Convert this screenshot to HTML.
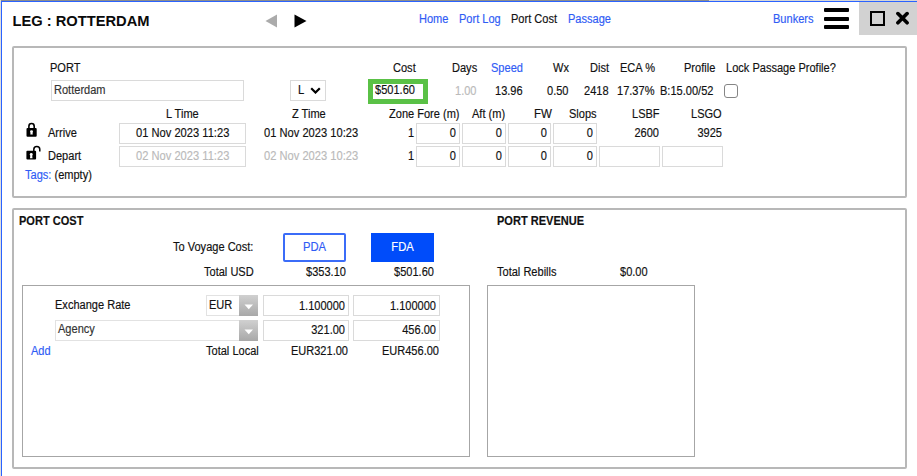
<!DOCTYPE html>
<html><head><meta charset="utf-8">
<style>
html,body{margin:0;padding:0;}
body{width:917px;height:476px;overflow:hidden;background:#fff;position:relative;font-family:"Liberation Sans",sans-serif;font-size:11px;color:#111;}
.a{position:absolute;}
.t{position:absolute;white-space:pre;line-height:13px;font-size:12px;transform:scaleX(0.92);transform-origin:0 0;-webkit-text-stroke-width:0.16px;}
.r{transform-origin:100% 0;}
.b{font-weight:bold;}
.bl{color:#2f5cf5;}
.g{color:#bababa;}
.box{position:absolute;box-sizing:border-box;border:1px solid #dadada;background:#fff;}
.r{text-align:right;transform-origin:100% 0 !important;}
.panel{position:absolute;box-sizing:border-box;border:2px solid #b8b8b8;border-radius:2px;}
.ibox{position:absolute;box-sizing:border-box;border:1px solid #a6a6a6;}
</style></head><body>
<!-- window chrome -->
<div class="a" style="left:0;top:0;width:709px;height:1px;background:#8c8c8c"></div>
<div class="a" style="left:709px;top:0;width:208px;height:1px;background:#d6d6d6"></div>
<div class="a" style="left:0;top:0;width:1px;height:476px;background:#dedede"></div>
<div class="a" style="left:1px;top:1px;width:916px;height:1px;background:#2b63ff"></div>
<div class="a" style="left:1px;top:1px;width:1px;height:475px;background:#2b63ff"></div>

<!-- header -->
<div class="t b" style="left:12.5px;top:13px;font-size:14.7px;line-height:17px;color:#0a0a0a;transform:none;-webkit-text-stroke-width:0">LEG : ROTTERDAM</div>
<svg class="a" style="left:265px;top:14px" width="13" height="14"><polygon points="12,0.5 12,13.5 0.5,7" fill="#ababab"/></svg>
<svg class="a" style="left:294px;top:14px" width="13" height="14"><polygon points="0.5,0.5 0.5,13.5 12.5,7" fill="#000"/></svg>
<div class="t bl" style="left:419px;top:13px">Home</div>
<div class="t bl" style="left:459px;top:13px">Port Log</div>
<div class="t" style="left:511px;top:13px">Port Cost</div>
<div class="t bl" style="left:568px;top:13px">Passage</div>
<div class="t bl" style="left:773px;top:13px">Bunkers</div>
<div class="a" style="left:824px;top:8px;width:25px;height:4px;background:#000;border-radius:1px"></div>
<div class="a" style="left:824px;top:17px;width:25px;height:4px;background:#000;border-radius:1px"></div>
<div class="a" style="left:824px;top:25px;width:25px;height:4px;background:#000;border-radius:1px"></div>
<div class="a" style="left:859px;top:2px;width:58px;height:33px;background:#d2d2d2"></div>
<div class="a" style="left:870px;top:11px;width:15px;height:15px;box-sizing:border-box;border:2.5px solid #000"></div>
<svg class="a" style="left:896px;top:11px" width="14" height="15"><path d="M1.9,2.6 L11.1,11.8 M11.1,2.6 L1.9,11.8" stroke="#000" stroke-width="3.6" stroke-linecap="round"/></svg>

<!-- top panel -->
<div class="panel" style="left:12px;top:46px;width:895px;height:152px"></div>
<div class="t" style="left:50px;top:62px">PORT</div>
<div class="box" style="left:51px;top:80px;width:193px;height:21px"></div>
<div class="t" style="left:54px;top:84px;color:#333">Rotterdam</div>
<div class="box" style="left:290px;top:80px;width:36px;height:21px"></div>
<div class="t" style="left:298px;top:84px;font-size:12.3px">L</div>
<svg class="a" style="left:310px;top:87px" width="11" height="7"><path d="M1.2,1.2 L5.5,5.5 L9.8,1.2" fill="none" stroke="#000" stroke-width="2.2"/></svg>
<div class="t" style="left:393px;top:62px">Cost</div>
<div class="a" style="left:368px;top:79px;width:60px;height:25px;box-sizing:border-box;border:5px solid #5ac146;background:#fff"></div>
<div class="t" style="left:375px;top:84px">$501.60</div>
<div class="t" style="left:452px;top:62px">Days</div>
<div class="t bl" style="left:491px;top:62px">Speed</div>
<div class="t" style="left:553px;top:62px">Wx</div>
<div class="t" style="left:590px;top:62px">Dist</div>
<div class="t" style="left:620px;top:62px">ECA %</div>
<div class="t" style="left:684px;top:62px">Profile</div>
<div class="t" style="left:726px;top:62px">Lock Passage Profile?</div>
<div class="t g" style="left:455px;top:85px">1.00</div>
<div class="t" style="left:495px;top:85px">13.96</div>
<div class="t" style="left:547px;top:85px">0.50</div>
<div class="t" style="left:584px;top:85px">2418</div>
<div class="t" style="left:617px;top:85px">17.37%</div>
<div class="t" style="left:660px;top:85px">B:15.00/52</div>
<div class="a" style="left:724px;top:84px;width:14px;height:14px;box-sizing:border-box;border:1.4px solid #858585;border-radius:3px"></div>

<div class="t" style="left:166px;top:108px">L Time</div>
<div class="t" style="left:292px;top:108px">Z Time</div>
<div class="t" style="left:389px;top:108px">Zone Fore (m)</div>
<div class="t" style="left:472px;top:108px">Aft (m)</div>
<div class="t" style="left:534px;top:108px;font-size:12.55px">FW</div>
<div class="t" style="left:569px;top:108px">Slops</div>
<div class="t" style="left:632px;top:108px">LSBF</div>
<div class="t" style="left:691px;top:108px">LSGO</div>

<!-- locks -->
<svg class="a" style="left:22px;top:120px" width="20" height="20"><path d="M6.9,8.5 V6.15 A2.65,2.65 0 0 1 12.2,6.15 V8.5" fill="none" stroke="#000" stroke-width="1.6"/><rect x="4.5" y="8" width="10.2" height="8.8" rx="1" fill="#000"/><circle cx="9.55" cy="11.6" r="1.45" fill="#fff"/><path d="M8.7,11.8 L10.4,11.8 L10.8,14.6 L8.3,14.6 Z" fill="#fff"/></svg>
<div class="t" style="left:48px;top:127px">Arrive</div>
<svg class="a" style="left:22px;top:142px" width="22" height="20"><path d="M11.8,9.2 V7.55 A3,3 0 0 1 17.8,7.55 V9.5" fill="none" stroke="#000" stroke-width="1.5"/><rect x="4.4" y="8.8" width="9.7" height="8.8" rx="1" fill="#000"/><circle cx="9.25" cy="12.5" r="1.45" fill="#fff"/><path d="M8.4,12.7 L10.1,12.7 L10.5,16.2 L8,16.2 Z" fill="#fff"/></svg>
<div class="t" style="left:48px;top:150px">Depart</div>
<div class="t" style="left:25px;top:169px"><span class="bl">Tags:</span> (empty)</div>

<div class="box" style="left:119px;top:123px;width:127px;height:21px"></div>
<div class="t" style="left:136px;top:127px;font-size:12.11px">01 Nov 2023 11:23</div>
<div class="box" style="left:119px;top:146px;width:127px;height:21px"></div>
<div class="t g" style="left:136px;top:150px;font-size:12.11px">02 Nov 2023 11:23</div>
<div class="t" style="left:264px;top:127px;font-size:12.11px">01 Nov 2023 10:23</div>
<div class="t g" style="left:264px;top:150px;font-size:12.11px">02 Nov 2023 10:23</div>

<div class="t" style="left:408px;top:127px">1</div>
<div class="t" style="left:408px;top:150px">1</div>
<div class="box" style="left:416px;top:123px;width:44px;height:21px"></div>
<div class="box" style="left:462px;top:123px;width:44px;height:21px"></div>
<div class="box" style="left:508px;top:123px;width:43px;height:21px"></div>
<div class="box" style="left:553px;top:123px;width:44px;height:21px"></div>
<div class="box" style="left:416px;top:146px;width:44px;height:21px"></div>
<div class="box" style="left:462px;top:146px;width:44px;height:21px"></div>
<div class="box" style="left:508px;top:146px;width:43px;height:21px"></div>
<div class="box" style="left:553px;top:146px;width:44px;height:21px"></div>
<div class="box" style="left:599px;top:146px;width:61px;height:21px"></div>
<div class="box" style="left:662px;top:146px;width:61px;height:21px"></div>
<div class="t r" style="left:416px;width:40px;top:127px">0</div>
<div class="t r" style="left:462px;width:40px;top:127px">0</div>
<div class="t r" style="left:508px;width:39px;top:127px">0</div>
<div class="t r" style="left:553px;width:40px;top:127px">0</div>
<div class="t r" style="left:416px;width:40px;top:150px">0</div>
<div class="t r" style="left:462px;width:40px;top:150px">0</div>
<div class="t r" style="left:508px;width:39px;top:150px">0</div>
<div class="t r" style="left:553px;width:40px;top:150px">0</div>
<div class="t r" style="left:599px;width:60px;top:127px">2600</div>
<div class="t r" style="left:662px;width:60px;top:127px">3925</div>

<!-- bottom panel -->
<div class="panel" style="left:12px;top:208px;width:895px;height:261px"></div>
<div class="t b" style="left:19px;top:215px">PORT COST</div>
<div class="t b" style="left:497px;top:215px">PORT REVENUE</div>
<div class="t" style="left:173px;top:241px;font-size:12px">To Voyage Cost:</div>
<div class="a" style="left:283px;top:233px;width:63px;height:29px;box-sizing:border-box;border:2px solid #3b6cf8;border-radius:2px"></div>
<div class="t bl" style="left:283px;width:63px;text-align:center;top:241px;font-size:12.2px;transform-origin:50% 0">PDA</div>
<div class="a" style="left:371px;top:233px;width:63px;height:28.5px;background:#004cfa"></div>
<div class="t" style="left:371px;width:63px;text-align:center;top:241px;color:#fff;font-size:12.2px;transform-origin:50% 0">FDA</div>
<div class="t" style="left:204px;top:266px">Total USD</div>
<div class="t" style="left:306px;top:266px">$353.10</div>
<div class="t" style="left:394px;top:266px">$501.60</div>
<div class="t" style="left:497px;top:266px">Total Rebills</div>
<div class="t" style="left:620px;top:266px">$0.00</div>

<div class="ibox" style="left:22px;top:285px;width:448px;height:172px"></div>
<div class="ibox" style="left:487px;top:285px;width:208px;height:172px"></div>

<div class="t" style="left:55px;top:299px">Exchange Rate</div>
<div class="box" style="left:206px;top:295px;width:52px;height:21px;border-color:#e2e2e2"></div>
<div class="a" style="left:239px;top:295px;width:19px;height:21px;background:linear-gradient(#d0d0d0,#a8a8a8)"></div>
<svg class="a" style="left:244px;top:304px" width="10" height="6"><polygon points="0.5,0.5 9,0.5 4.75,5.2" fill="#fff"/></svg>
<div class="t" style="left:209px;top:299px">EUR</div>
<div class="box" style="left:55px;top:320px;width:203px;height:21px;border-color:#e2e2e2"></div>
<div class="a" style="left:239px;top:320px;width:19px;height:21px;background:linear-gradient(#d0d0d0,#a8a8a8)"></div>
<svg class="a" style="left:244px;top:329px" width="10" height="6"><polygon points="0.5,0.5 9,0.5 4.75,5.2" fill="#fff"/></svg>
<div class="t" style="left:58px;top:323px;color:#333">Agency</div>

<div class="box" style="left:263px;top:295px;width:86px;height:21px"></div>
<div class="box" style="left:353px;top:295px;width:87px;height:21px"></div>
<div class="box" style="left:263px;top:320px;width:86px;height:21px"></div>
<div class="box" style="left:353px;top:320px;width:87px;height:21px"></div>
<div class="t r" style="left:263px;width:82px;top:300px">1.100000</div>
<div class="t r" style="left:353px;width:83px;top:300px">1.100000</div>
<div class="t r" style="left:263px;width:82px;top:324px">321.00</div>
<div class="t r" style="left:353px;width:83px;top:324px">456.00</div>
<div class="t bl" style="left:31px;top:345px">Add</div>
<div class="t" style="left:206px;top:345px">Total Local</div>
<div class="t r" style="left:262px;width:86px;top:345px">EUR321.00</div>
<div class="t r" style="left:352px;width:87px;top:345px">EUR456.00</div>
</body></html>
